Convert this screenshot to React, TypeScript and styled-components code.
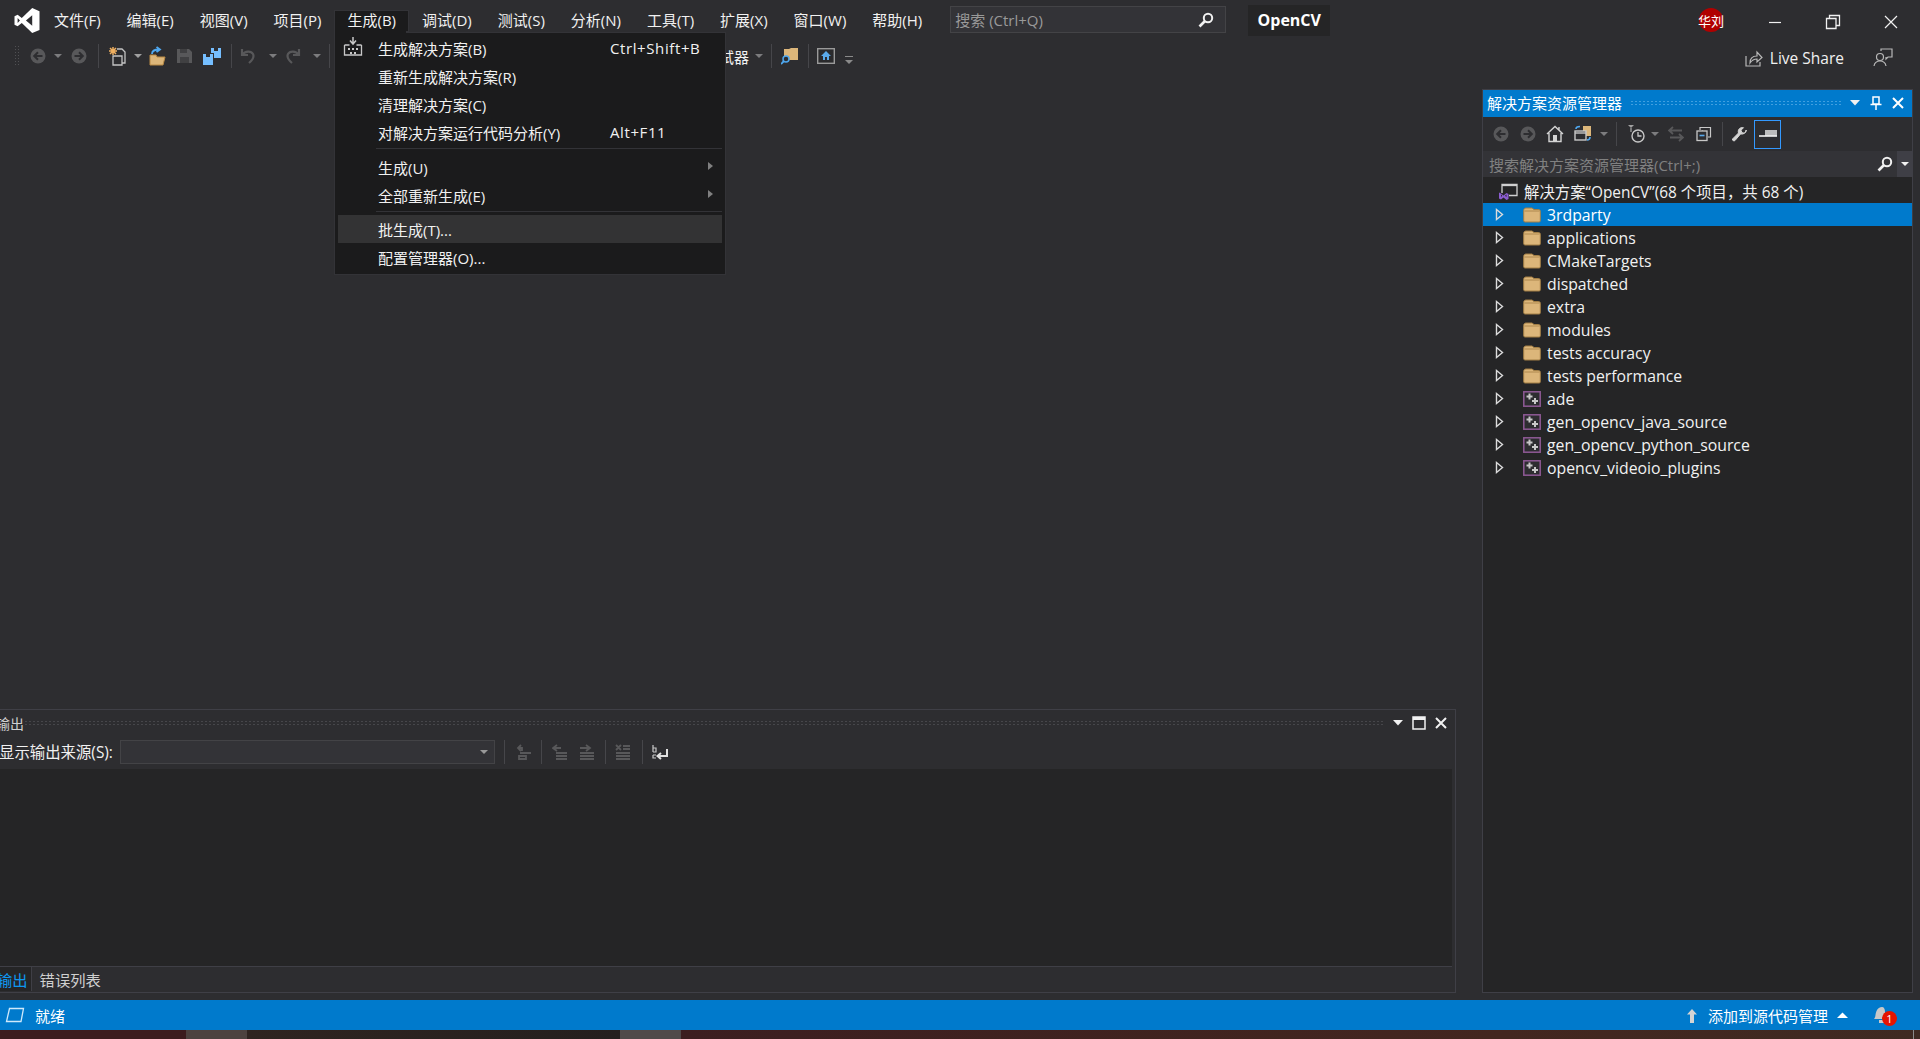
import React from "react";
import styled, { createGlobalStyle } from "styled-components";

const GlobalStyle = createGlobalStyle`
  html, body {
    margin: 0;
    padding: 0;
    background: #2d2d30;
  }
  * {
    box-sizing: border-box;
  }
`;

const FONT = `"Open Sans", "Noto Sans CJK SC", sans-serif`;

const Page = styled.div`
  display: flex;
  flex-direction: column;
  width: 1920px;
  height: 1039px;
  overflow: hidden;
  position: relative;
  background: #2d2d30;
  color: #f1f1f1;
  font-family: ${FONT};
  font-size: 15px;
`;

const TitleBar = styled.div`
  display: flex;
  align-items: flex-start;
  height: 40px;
  flex-shrink: 0;
`;

const Logo = styled.svg`
  width: 26px;
  height: 25px;
  margin: 8px 0 0 14px;
  flex-shrink: 0;
`;

const MenuBar = styled.div`
  display: flex;
  margin: 10px 0 0 1px;
`;

const MenuTab = styled.div<{ $open?: boolean }>`
  height: 22px;
  line-height: 20px;
  padding: 0 13px;
  white-space: nowrap;
  color: #f1f1f1;
  background: ${(p) => (p.$open ? "#1b1b1c" : "transparent")};
  box-shadow: ${(p) => (p.$open ? "inset 0 0 0 1px #333337" : "none")};
`;

const SearchBox = styled.div`
  display: flex;
  align-items: center;
  justify-content: space-between;
  width: 276px;
  height: 27px;
  margin: 6px 0 0 15px;
  padding: 0 11px 0 4px;
  background: #333337;
  border: 1px solid #434346;
  color: #999999;
  font-size: 15px;
`;

const ProjectChip = styled.div`
  width: 82px;
  height: 31px;
  line-height: 30px;
  margin: 5px 0 0 22px;
  background: #252526;
  color: #ffffff;
  text-align: center;
  font-size: 16px;
  font-weight: 700;
`;

const Avatar = styled.div`
  display: flex;
  align-items: center;
  justify-content: center;
  width: 24px;
  height: 24px;
  margin: 8px 0 0 auto;
  border-radius: 50%;
  background: #b00000;
  color: #fff;
  font-size: 13px;
  white-space: nowrap;
`;

const WindowButton = styled.div<{ $ml: number }>`
  display: flex;
  width: 16px;
  height: 16px;
  margin: 14px 0 0 ${(p) => p.$ml}px;
  flex-shrink: 0;
`;

const MenuPad = styled.div`
  width: 21px;
  flex-shrink: 0;
`;

const Toolbar = styled.div`
  display: flex;
  align-items: center;
  height: 32px;
  padding: 0 27px 0 14px;
  flex-shrink: 0;
`;

const Grip = styled.div`
  width: 6px;
  height: 22px;
  background-image: radial-gradient(#505053 1px, transparent 1px);
  background-size: 3px 3px;
`;

const Tool = styled.div<{ $ml: number; $w?: number; $mt?: number }>`
  display: flex;
  align-items: center;
  justify-content: center;
  width: ${(p) => p.$w ?? 16}px;
  height: 20px;
  margin-left: ${(p) => p.$ml}px;
  margin-top: ${(p) => p.$mt ?? 0}px;
  flex-shrink: 0;
`;

const Sep = styled.div<{ $ml: number }>`
  width: 1px;
  height: 24px;
  margin-left: ${(p) => p.$ml}px;
  background: #46464a;
  flex-shrink: 0;
`;

const Caret = styled.div<{ $ml: number; $color?: string }>`
  width: 0;
  height: 0;
  margin-left: ${(p) => p.$ml}px;
  border-left: 4px solid transparent;
  border-right: 4px solid transparent;
  border-top: 4px solid ${(p) => p.$color ?? "#7c7c7e"};
  flex-shrink: 0;
`;

const ToolText = styled.div<{ $ml: number }>`
  margin-left: ${(p) => p.$ml}px;
  width: 44px;
  white-space: nowrap;
`;

const LiveShare = styled.div`
  display: flex;
  align-items: center;
  gap: 7px;
  margin: 3px 0 0 auto;
  font-size: 15.5px;
  color: #f1f1f1;
`;

const FeedbackIcon = styled.svg`
  width: 20px;
  height: 20px;
  margin: 0 0 0 22px;
  flex-shrink: 0;
`;

const Workspace = styled.div`
  display: flex;
  flex: 1;
  min-height: 0;
  padding: 17px 7px 7px 0;
`;

const LeftColumn = styled.div`
  display: flex;
  flex-direction: column;
  justify-content: flex-end;
  width: 1456px;
  flex-shrink: 0;
`;

const OutputPanel = styled.div`
  display: flex;
  flex-direction: column;
  height: 284px;
  border: 1px solid #3f3f46;
  border-left: 0;
`;

const PanelHead = styled.div`
  display: flex;
  align-items: center;
  height: 27px;
  padding-bottom: 2px;
  flex-shrink: 0;
  color: #d0d0d0;
`;

const OutputTitle = styled.div`
  margin-left: -4px;
  width: 20px;
  white-space: nowrap;
  font-size: 14px;
`;

const GripLine = styled.div<{ $dot: string }>`
  flex: 1;
  height: 6px;
  margin: 0 8px;
  background-image: radial-gradient(${(p) => p.$dot} 0.8px, transparent 1px);
  background-size: 4px 3px;
`;

const HeadIcons = styled.div`
  display: flex;
  align-items: center;
  gap: 9px;
  padding-right: 8px;
`;

const OutputBar = styled.div`
  display: flex;
  align-items: center;
  height: 32px;
  padding-bottom: 2px;
  flex-shrink: 0;
`;

const SourceLabel = styled.div`
  width: 121px;
  margin: 0 0 2px -1px;
  white-space: nowrap;
  font-size: 15.4px;
  color: #f1f1f1;
`;

const Combo = styled.div`
  display: flex;
  align-items: center;
  justify-content: flex-end;
  width: 375px;
  height: 24px;
  padding-right: 6px;
  background: #333337;
  border: 1px solid #434346;
`;

const OutputBody = styled.div`
  flex: 1;
  background: #252526;
  border-bottom: 1px solid #3f3f46;
  margin-right: 3px;
`;

const TabStrip = styled.div`
  display: flex;
  height: 25px;
  flex-shrink: 0;
`;

const Tab = styled.div<{ $active?: boolean }>`
  height: 24px;
  line-height: 27px;
  padding: ${(p) => (p.$active ? "0 3px 0 0" : "0 8px")};
  margin-left: ${(p) => (p.$active ? "-3px" : "0")};
  font-size: 15.3px;
  white-space: nowrap;
  color: ${(p) => (p.$active ? "#0e97f0" : "#d0d0d0")};
  background: ${(p) => (p.$active ? "#252526" : "transparent")};
  border-right: ${(p) => (p.$active ? "1px solid #3f3f46" : "0")};
`;

const SolutionPanel = styled.div`
  display: flex;
  flex-direction: column;
  width: 431px;
  margin-left: 26px;
  border: 1px solid #3f3f46;
`;

const SolutionHead = styled(PanelHead)`
  background: #007acc;
  color: #ffffff;
  padding-left: 4px;
  font-size: 15px;
`;

const SolutionBar = styled.div`
  display: flex;
  align-items: center;
  height: 34px;
  flex-shrink: 0;
`;

const ActiveTool = styled.div`
  display: flex;
  align-items: center;
  justify-content: center;
  width: 27px;
  height: 29px;
  margin-left: 7px;
  border: 1px solid #3399ff;
  flex-shrink: 0;
`;

const TreeSearch = styled.div`
  display: flex;
  align-items: center;
  height: 26px;
  flex-shrink: 0;
  padding-left: 6px;
  background: #333337;
  color: #808080;
  font-size: 15px;
`;

const TreeSearchText = styled.div`
  flex: 1;
  white-space: nowrap;
`;

const TreeSearchDrop = styled.div`
  display: flex;
  align-items: center;
  justify-content: center;
  width: 15px;
  height: 26px;
  margin-left: 4px;
  background: #3f3f46;
`;

const Tree = styled.div`
  flex: 1;
  padding-top: 3px;
  background: #252526;
`;

const SolutionRow = styled.div`
  display: flex;
  align-items: center;
  gap: 6px;
  height: 23px;
  padding-left: 16px;
  color: #f1f1f1;
  white-space: nowrap;
  font-size: 15.4px;
`;

const TreeRow = styled.div<{ $selected?: boolean }>`
  display: flex;
  align-items: center;
  height: 23px;
  padding-left: 12px;
  white-space: nowrap;
  color: ${(p) => (p.$selected ? "#ffffff" : "#f1f1f1")};
  background: ${(p) => (p.$selected ? "#007acc" : "transparent")};
  font-size: 15.8px;
`;

const TreeIcon = styled.div`
  display: flex;
  width: 18px;
  margin: 0 6px 0 19px;
  flex-shrink: 0;
`;

const DropMenu = styled.div`
  position: absolute;
  left: 334px;
  top: 32px;
  width: 392px;
  height: 243px;
  padding: 1px 3px;
  background: #1b1b1c;
  border: 1px solid #333337;
  z-index: 5;
`;

const MenuCover = styled.div`
  position: absolute;
  left: 335px;
  top: 31px;
  width: 71px;
  height: 2px;
  background: #1b1b1c;
  z-index: 6;
`;

const MenuRow = styled.div<{ $hover?: boolean }>`
  display: flex;
  align-items: center;
  height: 28px;
  padding-left: 40px;
  white-space: nowrap;
  color: #f1f1f1;
  position: relative;
  background: ${(p) => (p.$hover ? "#333334" : "transparent")};
`;

const MenuLabel = styled.div`
  width: 232px;
  flex-shrink: 0;
`;

const Shortcut = styled.div`
  letter-spacing: 0.6px;
`;

const MenuIcon = styled.div`
  position: absolute;
  left: 5px;
  top: 3px;
  display: flex;
`;

const MenuArrow = styled.div`
  position: absolute;
  right: 9px;
  top: 9px;
  width: 0;
  height: 0;
  border-top: 4px solid transparent;
  border-bottom: 4px solid transparent;
  border-left: 5px solid #808080;
`;

const MenuDivider = styled.div`
  height: 1px;
  margin: 2px 0 1px 38px;
  background: #333337;
`;

const MenuGap = styled.div<{ $h: number }>`
  height: ${(p) => p.$h}px;
`;

const StatusBar = styled.div`
  display: flex;
  align-items: center;
  height: 30px;
  flex-shrink: 0;
  padding-left: 5px;
  background: #007acc;
  color: #ffffff;
  font-size: 15px;
`;

const StatusLabel = styled.div`
  margin: 0 9px 0 10px;
  white-space: nowrap;
`;

const StatusRight = styled.div`
  display: flex;
  align-items: center;
  margin-left: auto;
  padding-right: 30px;
`;

const BellWrap = styled.div`
  position: relative;
  display: flex;
  margin-left: 24px;
`;

const Badge = styled.div`
  position: absolute;
  left: 10px;
  top: 6px;
  width: 15px;
  height: 15px;
  line-height: 15px;
  border-radius: 50%;
  background: #e51400;
  color: #fff;
  font-size: 11px;
  text-align: center;
`;

const DesktopStrip = styled.div`
  display: flex;
  justify-content: flex-end;
  height: 9px;
  flex-shrink: 0;
  overflow: hidden;
  background: linear-gradient(
    to right,
    #3c1c1e 0,
    #3c1c1e 186px,
    #4d423f 186px,
    #4d423f 247px,
    #2f2420 247px,
    #241f1e 620px,
    #504a4a 620px,
    #504a4a 681px,
    #3c1e20 681px,
    #43261f 1500px,
    #3f2a22 1920px
  );
`;

const Clock = styled.div`
  width: 125px;
  padding-top: 7px;
  color: #fff;
  font-size: 14px;
  line-height: 16px;
`;

const ClockEdge = styled.div`
  width: 1px;
  height: 9px;
  margin-right: 6px;
  background: #8a8a8a;
`;

// icons

const Svg = ({ w = 16, h = 16, children }: { w?: number; h?: number; children: React.ReactNode }) => (
  <svg width={w} height={h} viewBox={`0 0 ${w} ${h}`} fill="none">
    {children}
  </svg>
);

const DIM = "#58585a";

const NavCircle = ({ right }: { right?: boolean }) => (
  <Svg>
    <circle cx="8" cy="8" r="7.5" fill={DIM} />
    <path
      d={right ? "M3.5 8h8M8 4.2 11.8 8 8 11.8" : "M12.5 8h-8M8 4.2 4.2 8 8 11.8"}
      stroke="#2d2d30"
      strokeWidth="2"
    />
  </Svg>
);

const NewProject = () => (
  <Svg w={18} h={20}>
    <path d="M5 10v9h9V10z" stroke="#c4c4c4" strokeWidth="1.300" />
    <path d="M9 3h5l3 3v11h-3" stroke="#c4c4c4" strokeWidth="1.300" />
    <path d="M5 1v8M1 5h8M2 2l6 6M8 2 2 8" stroke="#f0b060" strokeWidth="1.500" />
  </Svg>
);

const OpenFolder = () => (
  <Svg w={18} h={20}>
    <path d="M1 9h6l1 2h8l-2 8H1z" fill="#dcb67a" stroke="#b98a44" />
    <path d="M3 8c0-3 3-4.500 7-4.500M7.500 1 11 3.500 7.500 6" stroke="#4fa8f0" strokeWidth="1.800" />
  </Svg>
);

const SaveDisk = () => (
  <Svg>
    <path d="M0 1h12l3 3v11H0z" fill={DIM} />
    <path d="M3 1h7v4H3zM3 9h9v6H3z" fill="#2d2d30" opacity=".55" />
  </Svg>
);

const SaveAll = () => (
  <Svg w={18} h={18}>
    <path d="M0 7h10v11H0z" fill="#75beff" />
    <path d="M8 1h10v10h-7V6H8z" fill="#75beff" />
    <path d="M3 7h4v3H3zM11 1h4v3h-4z" fill="#2d2d30" />
  </Svg>
);

const Undo = ({ flip }: { flip?: boolean }) => (
  <svg width="16" height="16" viewBox="0 0 16 16" fill="none" transform={flip ? "scale(-1 1)" : undefined}>
    <path d="M2 1v6h6M2.500 6.500C5 3 11 2.500 13 6c1.500 3-.5 6-4 9" stroke={DIM} strokeWidth="2.200" />
  </svg>
);

const FindFolder = () => (
  <Svg w={18} h={18}>
    <path d="M3 2h5l2-1h7v12H3z" fill="#dcb67a" />
    <circle cx="5" cy="12" r="3" fill="#2d2d30" stroke="#4fa8f0" strokeWidth="1.500" />
    <path d="M3 14 0 17" stroke="#4fa8f0" strokeWidth="1.800" />
  </Svg>
);

const HomeBox = () => (
  <Svg w={18} h={16}>
    <rect x=".7" y=".7" width="16.600" height="14.600" stroke="#9a9a9a" strokeWidth="1.400" fill="#2a2a2c" />
    <path d="M9 3 4 8h2v4h6V8h2z" fill="#5aa9ea" />
    <path d="M8 9h2v3H8z" fill="#2a2a2c" />
  </Svg>
);

const Overflow = () => (
  <Svg w={8} h={8}>
    <path d="M0 0h8v1H0z" fill="#8a8a8a" />
    <path d="M0 4h8L4 8z" fill="#8a8a8a" />
  </Svg>
);

const ShareIcon = () => (
  <Svg w={18} h={18}>
    <path d="M1 7v10h14v-4" stroke="#b8b8b8" strokeWidth="1.200" />
    <path d="M5 14c0-5 3-7 7-7V3l5 5.500L12 13v-3c-3 0-5 1-7 4z" stroke="#b8b8b8" strokeWidth="1.200" />
  </Svg>
);

const SearchGlass = () => (
  <Svg>
    <circle cx="10" cy="6" r="4.200" stroke="#f1f1f1" strokeWidth="2" />
    <path d="M7 9 1.500 14.500" stroke="#f1f1f1" strokeWidth="2.600" />
  </Svg>
);

const FolderIcon = () => (
  <Svg w={18} h={16}>
    <path
      d="M.7 3.500C.7 2 1.500 1 3 1h6l2 1.500h4.500c1.200 0 1.800.8 1.800 1.800v9.500c0 .8-.5 1.200-1.200 1.200H2c-.8 0-1.300-.5-1.300-1.200z"
      fill="#dcb67a"
      stroke="#a37f45"
    />
    <path d="M1.500 4h15" stroke="#a37f45" strokeWidth=".8" />
  </Svg>
);

const ProjectIcon = () => (
  <Svg w={18} h={16}>
    <rect x=".8" y=".8" width="16.400" height="14.400" fill="#2d2d30" stroke="#8f5a96" strokeWidth="1.500" />
    <path d="M6.500 2.500v6M3.500 5.500h6M12 7v6M9 10h6" stroke="#c8c8c8" strokeWidth="2" />
  </Svg>
);

const SolutionIcon = () => (
  <Svg w={19} h={17}>
    <path d="M3 10V1.500h15v11H10" stroke="#d0d0d0" strokeWidth="1.300" />
    <path d="M3 2.500h15" stroke="#d0d0d0" strokeWidth="1.300" />
    <path d="M0 9.500l2 1 2.500 2 3-2.500 2 1v5l-2 1-3-2.500-2.500 2-2-1zM2 11.500v2.500l1.200-1.200zM7.500 11.500l-1.500 1.300 1.500 1.300z" fill="#8a5ccf" />
  </Svg>
);

const TreeArrow = () => (
  <Svg w={9} h={13}>
    <path d="M1.500 1.500 7.500 6.500 1.500 11.500z" stroke="#dcdcdc" strokeWidth="1.400" />
  </Svg>
);

const CloseX = ({ c = "#f1f1f1" }: { c?: string }) => (
  <Svg w={12} h={12}>
    <path d="M1 1 11 11M11 1 1 11" stroke={c} strokeWidth="2" />
  </Svg>
);

const DownSolid = () => (
  <Svg w={10} h={6}>
    <path d="M0 0h10L5 5.500z" fill="#f1f1f1" />
  </Svg>
);

const OutputAction = ({ d }: { d: string }) => (
  <Svg>
    <path d={d} stroke={DIM} strokeWidth="1.800" />
  </Svg>
);

const App = () => {
  const menus = ["文件(F)", "编辑(E)", "视图(V)", "项目(P)", "生成(B)", "调试(D)", "测试(S)", "分析(N)", "工具(T)", "扩展(X)", "窗口(W)", "帮助(H)"];
  const folders = ["3rdparty", "applications", "CMakeTargets", "dispatched", "extra", "modules", "tests accuracy", "tests performance"];
  const projects = ["ade", "gen_opencv_java_source", "gen_opencv_python_source", "opencv_videoio_plugins"];

  return (
    <Page>
      <GlobalStyle />
      <TitleBar>
        <Logo viewBox="0 0 24 24">
          <path
            fillRule="evenodd"
            fill="#fff"
            d="M17 0 24 3V21L17 24 7 14.500 3 17.500 0 16V8L3 6.500 7 9.500ZM3 9.500V14.500L5.200 12ZM17 7 11 12 17 17Z"
          />
        </Logo>
        <MenuBar>
          {menus.map((m, i) => (
            <MenuTab key={m} $open={i === 4}>
              {m}
            </MenuTab>
          ))}
        </MenuBar>
        <SearchBox>
          搜索 (Ctrl+Q)
          <SearchGlass />
        </SearchBox>
        <ProjectChip>OpenCV</ProjectChip>
        <Avatar>华刘</Avatar>
        <WindowButton $ml={44}>
          <Svg>
            <path d="M2 8.500h12" stroke="#f1f1f1" strokeWidth="1.200" />
          </Svg>
        </WindowButton>
        <WindowButton $ml={42}>
          <Svg>
            <path d="M1.500 4.500h9.500v10H1.500zM4.500 4.500V1.500H14.500V11.500H11" stroke="#f1f1f1" strokeWidth="1.300" />
          </Svg>
        </WindowButton>
        <WindowButton $ml={42}>
          <Svg>
            <path d="M2 2 14 14M14 2 2 14" stroke="#f1f1f1" strokeWidth="1.200" />
          </Svg>
        </WindowButton>
        <MenuPad />
      </TitleBar>

      <Toolbar>
        <Grip />
        <Tool $ml={10}><NavCircle /></Tool>
        <Caret $ml={8} />
        <Tool $ml={9}><NavCircle right /></Tool>
        <Sep $ml={11} />
        <Tool $ml={9} $w={18}><NewProject /></Tool>
        <Caret $ml={8} $color="#a0a0a0" />
        <Tool $ml={7} $w={18}><OpenFolder /></Tool>
        <Tool $ml={10}><SaveDisk /></Tool>
        <Tool $ml={10} $w={18}><SaveAll /></Tool>
        <Sep $ml={10} />
        <Tool $ml={8}><Undo /></Tool>
        <Caret $ml={13} />
        <Tool $ml={8}><Undo flip /></Tool>
        <Caret $ml={12} />
        <Sep $ml={8} />
        <ToolText $ml={374}>调试器</ToolText>
        <Caret $ml={7} />
        <Sep $ml={8} />
        <Tool $ml={9} $w={18}><FindFolder /></Tool>
        <Sep $ml={9} />
        <Tool $ml={8} $w={18}><HomeBox /></Tool>
        <Tool $ml={10} $w={8} $mt={8}><Overflow /></Tool>
        <LiveShare>
          <ShareIcon />
          Live Share
          <FeedbackIcon viewBox="0 0 20 20" fill="none">
            <path d="M8 3V1h11v8h-4l-2 2V9" stroke="#b8b8b8" strokeWidth="1.200" />
            <circle cx="7" cy="9" r="3.500" stroke="#b8b8b8" strokeWidth="1.200" />
            <path d="M1 18c.5-3 3-5 6-5s5.500 2 6 5" stroke="#b8b8b8" strokeWidth="1.200" />
          </FeedbackIcon>
        </LiveShare>
      </Toolbar>

      <Workspace>
        <LeftColumn>
          <OutputPanel>
            <PanelHead>
              <OutputTitle>输出</OutputTitle>
              <GripLine $dot="#46464a" />
              <HeadIcons>
                <DownSolid />
                <Svg w={14} h={14}>
                  <path d="M1 1h12v12H1z" fill="#2d2d30" stroke="#f1f1f1" strokeWidth="1.500" />
                  <path d="M1 2.500h12" stroke="#f1f1f1" strokeWidth="3" />
                </Svg>
                <CloseX />
              </HeadIcons>
            </PanelHead>
            <OutputBar>
              <SourceLabel>显示输出来源(S):</SourceLabel>
              <Combo>
                <Caret $ml={0} $color="#999999" />
              </Combo>
              <Sep $ml={9} />
              <Tool $ml={10}><OutputAction d="M6 1 3 4l3 3M3 4h4v3M5 9h11M4 12h7v3H4z" /></Tool>
              <Sep $ml={10} />
              <Tool $ml={10}><OutputAction d="M5 1 1 4l4 3M1 4h8M4 9h11M4 12h11M4 15h11" /></Tool>
              <Tool $ml={11}><OutputAction d="M7 1l4 3-4 3M1 4h9M1 9h14M1 12h14M1 15h14" /></Tool>
              <Sep $ml={10} />
              <Tool $ml={9}><OutputAction d="M1 1l5 5M6 1 1 6M8 2h7M8 5h7M1 9h14M1 12h14M1 15h14" /></Tool>
              <Sep $ml={11} />
              <Tool $ml={9}>
                <Svg>
                  <path d="M15 5v7H6M9 9 5.500 12 9 15" stroke="#e0e0e0" strokeWidth="2" />
                  <path d="M1 1v7M1 4h3v4H1M1 11h3M1 11v3h3" stroke="#c8c8c8" strokeWidth="1.200" />
                </Svg>
              </Tool>
            </OutputBar>
            <OutputBody />
            <TabStrip>
              <Tab $active>输出</Tab>
              <Tab>错误列表</Tab>
            </TabStrip>
          </OutputPanel>
        </LeftColumn>

        <SolutionPanel>
          <SolutionHead>
            解决方案资源管理器
            <GripLine $dot="#3f9fe0" />
            <HeadIcons>
              <DownSolid />
              <Svg w={14} h={14}>
                <path d="M4 1h6v7H4zM1.500 8.500h11M7 9v5" stroke="#fff" strokeWidth="1.500" />
              </Svg>
              <CloseX c="#ffffff" />
            </HeadIcons>
          </SolutionHead>
          <SolutionBar>
            <Tool $ml={10}><NavCircle /></Tool>
            <Tool $ml={11}><NavCircle right /></Tool>
            <Tool $ml={10} $w={18}>
              <Svg w={18} h={18}>
                <path d="M1 9 9 1.500 17 9M3 8v8.500h12V8M13 2v3" stroke="#d4d4d4" strokeWidth="1.400" />
                <path d="M7 10h4v6.500H7z" fill="#d4d4d4" />
              </Svg>
            </Tool>
            <Tool $ml={10} $w={18}>
              <Svg w={18} h={18}>
                <path d="M9 1h8v10H9z" fill="#dcb67a" />
                <rect x="1" y="6" width="11" height="9" fill="#2d2d30" stroke="#c8c8c8" strokeWidth="1.400" />
                <path d="M1 8h11" stroke="#c8c8c8" strokeWidth="1.400" />
                <path d="M2 4c0-2 2-2.500 4-2.500M13 15c2 0 3-1 3-3" stroke="#4fa8f0" strokeWidth="1.600" />
              </Svg>
            </Tool>
            <Caret $ml={8} />
            <Sep $ml={8} />
            <Tool $ml={11} $w={18}>
              <Svg w={18} h={18}>
                <path d="M0 0h6L3 3z" fill="#a0a0a0" />
                <circle cx="10" cy="11" r="6" stroke="#c8c8c8" strokeWidth="1.400" />
                <path d="M10 7v4h3.500" stroke="#c8c8c8" strokeWidth="1.300" />
                <path d="M3 3v4" stroke="#a0a0a0" strokeWidth="1.300" />
              </Svg>
            </Tool>
            <Caret $ml={5} />
            <Tool $ml={9}>
              <OutputAction d="M5 1 1 4.500 5 8M1 4.500h13M11 8l4 3.500-4 3.500M15 11.500H2" />
            </Tool>
            <Tool $ml={12}>
              <Svg>
                <path d="M4 4V1.500h10.500V11H12M6.500 4.500V7" stroke="#c8c8c8" strokeWidth="1.200" />
                <rect x="1" y="5" width="10" height="9.500" fill="#2d2d30" stroke="#c8c8c8" strokeWidth="1.300" />
                <path d="M3.500 9.500h5" stroke="#5aa9ea" strokeWidth="1.600" />
              </Svg>
            </Tool>
            <Sep $ml={10} />
            <Tool $ml={8}>
              <Svg>
                <path
                  d="M15 4c0 3-2.500 4.500-5.500 4L4 14.500c-1 1-3 0-2.500-1.500l6-6c-1-3 1-5.500 4-5.500l1 .2-2.500 2.500 1 2.500 2.500.5 2-2.500z"
                  fill="#d4d4d4"
                  stroke="#d4d4d4"
                />
              </Svg>
            </Tool>
            <ActiveTool>
              <Svg w={18} h={8}>
                <path d="M6 0h12v6H6z" fill="#bcbcbc" />
                <path d="M0 6h18" stroke="#f1f1f1" strokeWidth="1.600" />
              </Svg>
            </ActiveTool>
          </SolutionBar>
          <TreeSearch>
            <TreeSearchText>搜索解决方案资源管理器(Ctrl+;)</TreeSearchText>
            <SearchGlass />
            <TreeSearchDrop>
              <Caret $ml={0} $color="#f1f1f1" />
            </TreeSearchDrop>
          </TreeSearch>
          <Tree>
            <SolutionRow>
              <SolutionIcon />
              解决方案“OpenCV”(68 个项目，共 68 个)
            </SolutionRow>
            {folders.map((f, i) => (
              <TreeRow key={f} $selected={i === 0}>
                <TreeArrow />
                <TreeIcon><FolderIcon /></TreeIcon>
                {f}
              </TreeRow>
            ))}
            {projects.map((p) => (
              <TreeRow key={p}>
                <TreeArrow />
                <TreeIcon><ProjectIcon /></TreeIcon>
                {p}
              </TreeRow>
            ))}
          </Tree>
        </SolutionPanel>
      </Workspace>

      <StatusBar>
        <Svg w={20} h={16}>
          <path d="M4.500 1.500h14l-2.500 13H1.500z" stroke="#cfe9fb" strokeWidth="1.300" />
        </Svg>
        <StatusLabel>就绪</StatusLabel>
        <StatusRight>
          <Svg w={12} h={15}>
            <path d="M6 1 1 6.500h3V15h4V6.500h3z" fill="#d4d4d4" />
          </Svg>
          <StatusLabel>添加到源代码管理</StatusLabel>
          <Svg w={11} h={6}>
            <path d="M0 6h11L5.500 .5z" fill="#ffffff" />
          </Svg>
          <BellWrap>
            <Svg w={18} h={20}>
              <path d="M2 14c2-2 1-5 2.500-8C5.500 3.500 8 2 10 2s3 2 3 5 1 5 2 7zM7 15h5v3H7z" fill="#c8c8c8" />
            </Svg>
            <Badge>1</Badge>
          </BellWrap>
        </StatusRight>
      </StatusBar>
      <DesktopStrip>
        <Clock>10:32</Clock>
        <ClockEdge />
      </DesktopStrip>

      <DropMenu>
        <MenuRow>
          <MenuIcon>
            <Svg w={20} h={20}>
              <path d="M10 0v6M7 3.500 10 7l3-3.500" stroke="#c8c8c8" strokeWidth="1.500" />
              <path d="M1.500 8h5M13.500 8h5M1.500 8v10h17V8" stroke="#c8c8c8" strokeWidth="1.300" />
              <path d="M5 11h2v2H5zM9 11h2v2H9zM13 11h2v2h-2zM7 15h2v2H7zM11 15h2v2h-2z" fill="#c8c8c8" />
            </Svg>
          </MenuIcon>
          <MenuLabel>生成解决方案(B)</MenuLabel>
          <Shortcut>Ctrl+Shift+B</Shortcut>
        </MenuRow>
        <MenuRow><MenuLabel>重新生成解决方案(R)</MenuLabel></MenuRow>
        <MenuRow><MenuLabel>清理解决方案(C)</MenuLabel></MenuRow>
        <MenuRow>
          <MenuLabel>对解决方案运行代码分析(Y)</MenuLabel>
          <Shortcut>Alt+F11</Shortcut>
        </MenuRow>
        <MenuDivider />
        <MenuGap $h={3} />
        <MenuRow><MenuLabel>生成(U)</MenuLabel><MenuArrow /></MenuRow>
        <MenuRow><MenuLabel>全部重新生成(E)</MenuLabel><MenuArrow /></MenuRow>
        <MenuDivider />
        <MenuGap $h={2} />
        <MenuRow $hover><MenuLabel>批生成(T)...</MenuLabel></MenuRow>
        <MenuRow><MenuLabel>配置管理器(O)...</MenuLabel></MenuRow>
      </DropMenu>
      <MenuCover />
    </Page>
  );
};

export default App;
